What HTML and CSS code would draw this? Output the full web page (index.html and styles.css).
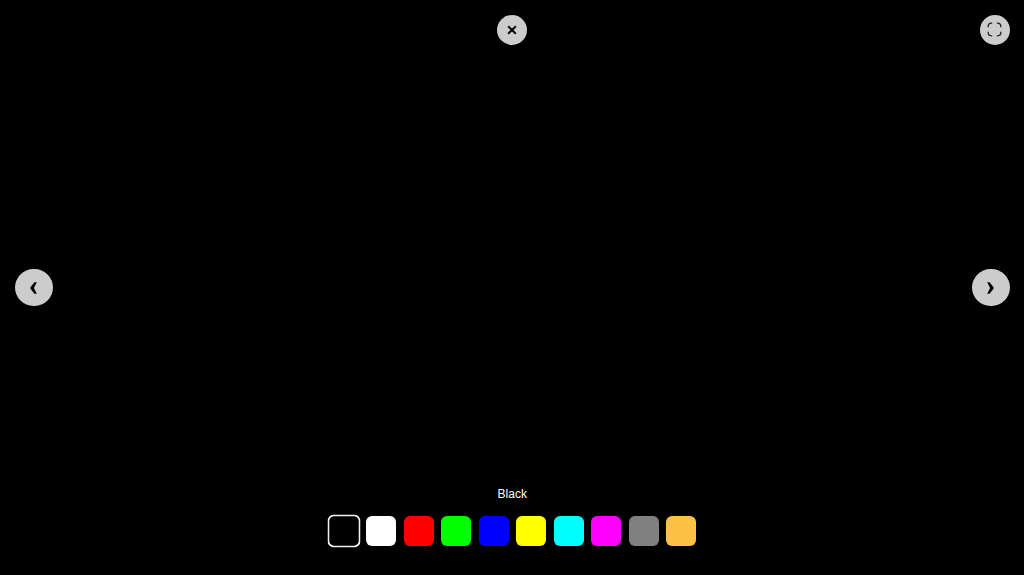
FILE: index.html
```html
<!DOCTYPE html>
<html lang="en">
<head>
<meta charset="utf-8">
<title>Screen test</title>
<link rel="stylesheet" href="styles.css">
</head>
<body>
<main class="stage">
  <button class="btn btn-small close" aria-label="Close">
    <svg class="icon icon-close" viewBox="0 0 10 10"><path d="M1.2 1.2 8.8 8.8M8.8 1.2 1.2 8.8"/></svg>
  </button>
  <button class="btn btn-small full" aria-label="Fullscreen">
    <svg class="icon icon-full" viewBox="0 0 15 15"><path d="M1.2 5.2V4.4Q1.2 1.2 4.4 1.2H5.2M9.8 1.2H10.6Q13.8 1.2 13.8 4.4V5.2M13.8 9.8V10.6Q13.8 13.8 10.6 13.8H9.8M5.2 13.8H4.4Q1.2 13.8 1.2 10.6V9.8"/></svg>
  </button>
  <button class="btn btn-large prev" aria-label="Previous">
    <svg class="icon icon-chev" viewBox="0 0 7 12"><path d="M4.4 0.3H6.8L3.9 6 6.8 11.7H4.4L0.3 6.6V5.4Z"/></svg>
  </button>
  <button class="btn btn-large next" aria-label="Next">
    <svg class="icon icon-chev" viewBox="0 0 7 12"><path d="M2.6 0.3H0.2L3.1 6 0.2 11.7H2.6L6.7 6.6V5.4Z"/></svg>
  </button>
  <div class="controls">
    <div class="label">Black</div>
    <div class="swatches">
      <span class="swatch selected c-black"></span>
      <span class="swatch c-white"></span>
      <span class="swatch c-red"></span>
      <span class="swatch c-green"></span>
      <span class="swatch c-blue"></span>
      <span class="swatch c-yellow"></span>
      <span class="swatch c-cyan"></span>
      <span class="swatch c-magenta"></span>
      <span class="swatch c-gray"></span>
      <span class="swatch c-orange"></span>
    </div>
  </div>
</main>
</body>
</html>
```

FILE: styles.css
```css
* { box-sizing: border-box; }
html, body { margin: 0; height: 100%; background: #000; overflow: hidden; }
body { font-family: "Liberation Sans", Arial, sans-serif; }

.stage {
  position: relative;
  height: 575px;
  display: flex;
  flex-direction: column;
  justify-content: flex-end;
  align-items: center;
  padding: 0 0 29px 0.5px;
}

.btn {
  position: absolute;
  display: flex;
  align-items: center;
  justify-content: center;
  padding: 0;
  border: 0;
  border-radius: 50%;
  background: #ccc;
  color: #000;
}
.btn-small { width: 30px; height: 30px; top: 15px; }
.btn-large { width: 37.5px; height: 37.5px; top: 268.75px; }
.close { left: 497.25px; }
.full { right: 14.5px; }
.prev { left: 15px; }
.next { right: 14.5px; }

.icon { display: block; }
.icon-close { width: 10px; height: 10px; margin-top: -1px; fill: none; stroke: #000; stroke-width: 2; }
.icon-full { width: 15px; height: 15px; margin-top: -1px; fill: none; stroke: #222; stroke-width: 1.3; }
.icon-chev { width: 7px; height: 12px; margin-top: 1px; fill: #000; }

.controls { display: flex; flex-direction: column; align-items: center; gap: 15px; }
.label { color: #fff; font-size: 12px; line-height: 14px; }
.swatches { display: flex; gap: 7.5px; }
.swatch { width: 30px; height: 30px; border-radius: 6px; display: block; }
.selected { box-shadow: inset 0 0 0 1.6px #f2f2f2; transform: scale(1.1); }
.c-black { background: #000; }
.c-white { background: #fff; }
.c-red { background: #f00; }
.c-green { background: #0f0; }
.c-blue { background: #00f; }
.c-yellow { background: #ff0; }
.c-cyan { background: #0ff; }
.c-magenta { background: #f0f; }
.c-gray { background: #808080; }
.c-orange { background: #ffc145; }
```
